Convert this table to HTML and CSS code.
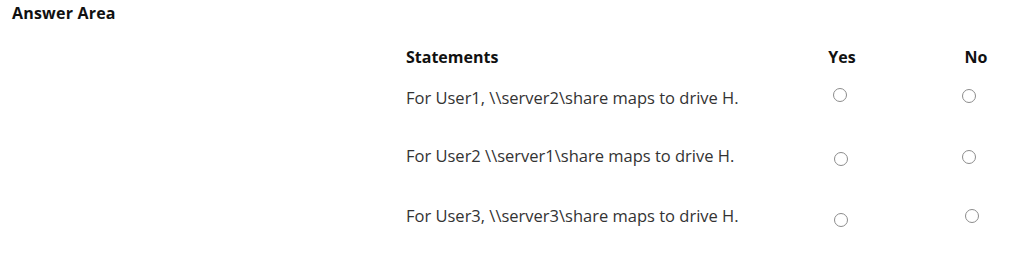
FILE: index.html
```html
<!DOCTYPE html>
<html>
<head>
<meta charset="utf-8">
<link rel="stylesheet" href="styles.css">
</head>
<body>
<div class="page">
  <div class="title">Answer Area</div>
  <div class="grid">
    <div class="head stmt">Statements</div>
    <div class="head opt">Yes</div>
    <div class="head opt">No</div>

    <div class="cell stmt">For User1, \\server2\share maps to drive H.</div>
    <div class="cell opt yes"><span class="radio dy0"></span></div>
    <div class="cell opt no"><span class="radio dy1"></span></div>

    <div class="cell stmt">For User2 \\server1\share maps to drive H.</div>
    <div class="cell opt yes"><span class="radio dy6 dx1"></span></div>
    <div class="cell opt no"><span class="radio dy4"></span></div>

    <div class="cell stmt">For User3, \\server3\share maps to drive H.</div>
    <div class="cell opt yes"><span class="radio dy7 dx1"></span></div>
    <div class="cell opt no"><span class="radio dy3 dx3"></span></div>
  </div>
</div>
</body>
</html>
```
FILE: styles.css
```css
html, body {
  margin: 0;
  padding: 0;
  background: #ffffff;
}
.page {
  padding: 3px 0 0 12px;
  font-family: "Open Sans", "Noto Sans", sans-serif;
}
.title {
  font-weight: 700;
  font-size: 16px;
  color: #111;
  line-height: 20px;
  letter-spacing: 0.2px;
}
.grid {
  margin-left: 394px;
  margin-top: 24px;
  display: grid;
  grid-template-columns: 318px 32px 32px;
  column-gap: 102px;
  grid-template-rows: 41px 58px 60px 30px;
  align-items: start;
}
.head {
  font-weight: 700;
  font-size: 16px;
  color: #111;
  line-height: 20px;
  white-space: nowrap;
}
.head.opt {
  text-align: center;
}
.cell.stmt {
  font-size: 16.5px;
  color: #333;
  line-height: 20px;
  white-space: nowrap;
}
.cell.opt {
  display: flex;
  align-items: flex-start;
  min-height: 26px;
}
.cell.yes {
  padding-left: 7px;
}
.cell.no {
  padding-left: 2px;
}
.radio {
  display: block;
  flex: 0 0 auto;
  width: 12px;
  height: 12px;
  border: 1.5px solid #8c8c8c;
  border-radius: 50%;
}
.dy0 { margin-top: 0; }
.dy1 { margin-top: 1px; }
.dy3 { margin-top: 3px; }
.dy4 { margin-top: 4px; }
.dy6 { margin-top: 6px; }
.dy7 { margin-top: 7px; }
.dx1 { margin-left: 1px; }
.dx3 { margin-left: 3px; }
```
